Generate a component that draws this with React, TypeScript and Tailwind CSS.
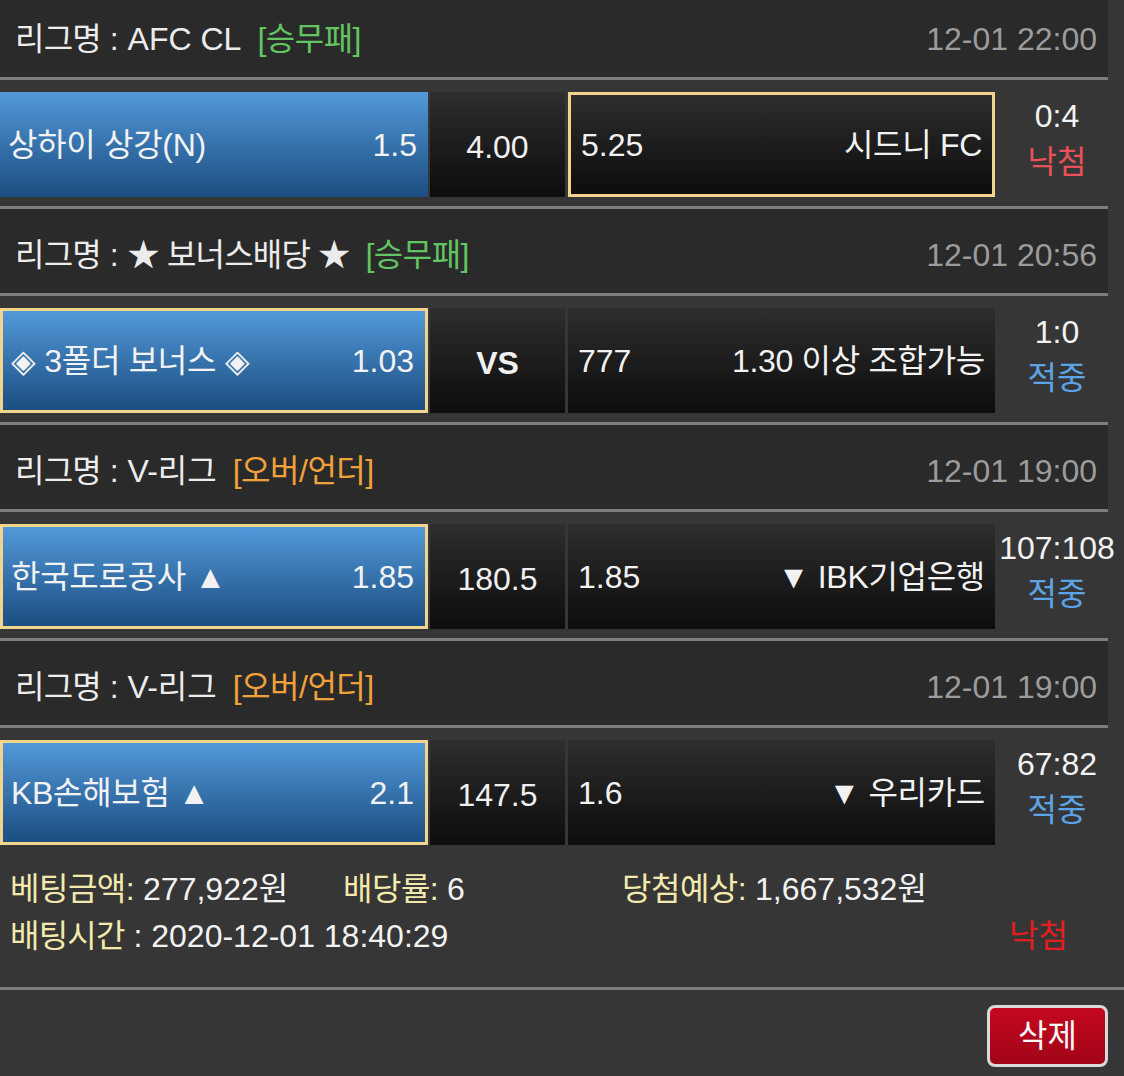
import React from "react";

type Sec = {
  league: string;
  leagueKo?: boolean;
  tag: string;
  tagColor: string;
  date: string;
  home: string;
  homeOdds: string;
  mid: string;
  midBold?: boolean;
  awayOdds: string;
  away: string;
  sel: "home" | "away";
  score: string;
  result: string;
  resultColor: string;
};

const GREEN = "text-[#62c462]";
const ORANGE = "text-[#f0a23a]";

const sections: Sec[] = [
  {
    league: "AFC CL",
    tag: "[승무패]",
    tagColor: GREEN,
    date: "12-01 22:00",
    home: "상하이 상강(N)",
    homeOdds: "1.5",
    mid: "4.00",
    awayOdds: "5.25",
    away: "시드니 FC",
    sel: "away",
    score: "0:4",
    result: "낙첨",
    resultColor: "text-[#e8505a]",
  },
  {
    league: "★ 보너스배당 ★",
    leagueKo: true,
    tag: "[승무패]",
    tagColor: GREEN,
    date: "12-01 20:56",
    home: "◈ 3폴더 보너스 ◈",
    homeOdds: "1.03",
    mid: "VS",
    midBold: true,
    awayOdds: "777",
    away: "1.30 이상 조합가능",
    sel: "home",
    score: "1:0",
    result: "적중",
    resultColor: "text-[#5ca4e6]",
  },
  {
    league: "V-리그",
    tag: "[오버/언더]",
    tagColor: ORANGE,
    date: "12-01 19:00",
    home: "한국도로공사 ▲",
    homeOdds: "1.85",
    mid: "180.5",
    awayOdds: "1.85",
    away: "▼ IBK기업은행",
    sel: "home",
    score: "107:108",
    result: "적중",
    resultColor: "text-[#5ca4e6]",
  },
  {
    league: "V-리그",
    tag: "[오버/언더]",
    tagColor: ORANGE,
    date: "12-01 19:00",
    home: "KB손해보험 ▲",
    homeOdds: "2.1",
    mid: "147.5",
    awayOdds: "1.6",
    away: "▼ 우리카드",
    sel: "home",
    score: "67:82",
    result: "적중",
    resultColor: "text-[#5ca4e6]",
  },
];

function Section({ s }: { s: Sec }) {
  return (
    <div className="w-[1108px]">
      <div className="h-[3px] bg-[#7d7d7d]" />
      <div className="h-[84px] bg-[#2a2a2a] flex items-center justify-between pl-[15px] pr-[11px] pt-[8px]">
        <div className="flex items-center text-[#ececec] whitespace-nowrap">
          <span className="tracking-[-0.8px]">리그명</span>
          <span>&nbsp;:&nbsp;</span>
          <span className={s.leagueKo ? "tracking-[-0.8px]" : ""}>{s.league}</span>
          <span className={`ml-[16px] tracking-[-0.5px] ${s.tagColor}`}>{s.tag}</span>
        </div>
        <div className="text-[#9c9c9c] whitespace-nowrap">{s.date}</div>
      </div>
      <div className="h-[3px] bg-[#7d7d7d]" />
      <div className="flex pt-[12px] pb-[9px]">
        <div
          className={`w-[428px] h-[105px] flex items-center justify-between pl-[8px] pr-[11px] bg-linear-to-b from-[#5299d9] to-[#1c4e82] text-[#f2f2f2] whitespace-nowrap ${
            s.sel === "home" ? "border-[3px] border-[#f3d48c]" : ""
          }`}
        >
          <span className="tracking-[-0.3px]">{s.home}</span>
          <span>{s.homeOdds}</span>
        </div>
        <div
          className={`ml-[2px] w-[135px] h-[105px] flex items-center justify-center pt-[4px] bg-linear-to-b from-[#2e2e2e] to-[#0d0d0d] text-[#f0f0f0] ${
            s.midBold ? "font-bold" : ""
          }`}
        >
          {s.mid}
        </div>
        <div
          className={`ml-[3px] w-[427px] h-[105px] flex items-center justify-between px-[10px] bg-linear-to-b from-[#2e2e2e] to-[#0d0d0d] text-[#f2f2f2] whitespace-nowrap ${
            s.sel === "away" ? "border-[3px] border-[#f3d48c]" : ""
          }`}
        >
          <span>{s.awayOdds}</span>
          <span className="tracking-[-0.3px]">{s.away}</span>
        </div>
        <div className="w-[113px] h-[105px] pl-[11px] pt-[1px] flex flex-col items-center leading-[46px] whitespace-nowrap">
          <span className="text-[#f2f2f2]">{s.score}</span>
          <span className={s.resultColor}>{s.result}</span>
        </div>
      </div>
    </div>
  );
}

export default function App() {
  return (
    <div className="w-[1124px] h-[1076px] overflow-hidden bg-[#363636] text-[32px] leading-none font-['Liberation_Sans','Noto_Sans_CJK_KR',sans-serif]">
      <div className="-mt-[10px]">
        {sections.map((s, i) => (
          <Section key={i} s={s} />
        ))}
        <div className="pt-[12px] pl-[10px] leading-[47px] whitespace-nowrap">
          <div className="flex">
            <div className="w-[333px]">
              <span className="text-[#f3e9ad] tracking-[-0.5px]">베팅금액:</span>
              <span className="text-[#f2f2f2]"> 277,922원</span>
            </div>
            <div className="w-[279px]">
              <span className="text-[#f3e9ad] tracking-[-0.5px]">배당률:</span>
              <span className="text-[#f2f2f2]"> 6</span>
            </div>
            <div>
              <span className="text-[#f3e9ad] tracking-[-0.5px]">당첨예상:</span>
              <span className="text-[#f2f2f2]"> 1,667,532원</span>
            </div>
          </div>
          <div className="flex justify-between pr-[56px]">
            <div>
              <span className="text-[#f3e9ad] tracking-[-0.8px]">배팅시간</span>
              <span className="text-[#f2f2f2]"> : 2020-12-01 18:40:29</span>
            </div>
            <span className="text-[#e41e1e]">낙첨</span>
          </div>
        </div>
        <div className="mt-[27px] h-[3px] bg-[#7d7d7d]" />
        <div className="flex justify-end pr-[16px] pt-[15px]">
          <button className="w-[121px] h-[62px] rounded-[8px] border-[3px] border-[#d9d9d9] bg-linear-to-b from-[#c4081f] to-[#a20518] text-[#f7f7f7] flex items-center justify-center">
            삭제
          </button>
        </div>
      </div>
    </div>
  );
}
